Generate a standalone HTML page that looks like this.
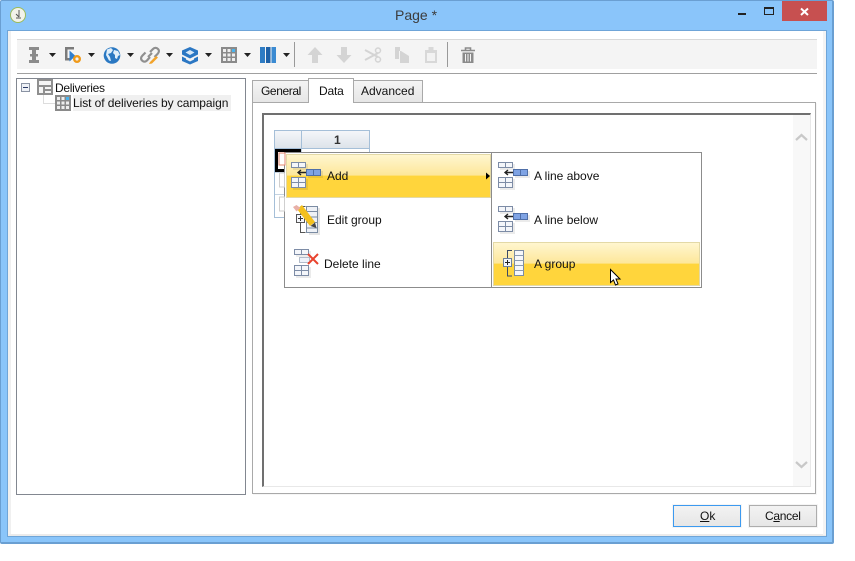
<!DOCTYPE html>
<html><head><meta charset="utf-8"><style>
html,body{margin:0;padding:0;background:#fff;width:855px;height:561px;overflow:hidden}
body{font:12px "Liberation Sans",sans-serif;color:#111;position:relative}
div{position:absolute;box-sizing:border-box}
.t{white-space:nowrap;line-height:14px}
svg{position:absolute;left:0;top:0}
u{text-underline-offset:1px}
</style></head><body>
<div style="left:0;top:0;width:834px;height:544px;background:#8ac5fa;border:1px solid #6a9fd2;border-radius:2px;border-width:1px 2px 2px 1px"></div>
<div style="left:7px;top:30px;width:820px;height:507px;background:#fff;border:1px solid #6fa5d8;border-right:2px solid #6fa5d8"></div>
<div style="left:8px;top:31px;width:3px;height:504px;background:#f0f0f0"></div>
<div style="left:8px;top:534px;width:818px;height:2px;background:#ebebeb"></div>
<div style="left:823px;top:31px;width:3px;height:504px;background:#f4f4f4"></div>
<div class="t" style="left:395px;top:8px;font-size:14px;color:#3c3c3c">Page *</div>
<div style="left:782px;top:1px;width:45px;height:20px;background:#c75050"></div>
<div style="left:738px;top:13px;width:8px;height:2px;background:#222"></div>
<div style="left:764px;top:7px;width:10px;height:8px;border:1px solid #222;border-top:2px solid #222"></div>

<div style="left:17px;top:39px;width:800px;height:30px;background:#f4f4f4;border-top:1px solid #d9d9d9"></div>
<div style="left:17px;top:73px;width:800px;height:1px;background:#a0a0a0"></div>
<div style="left:294px;top:42px;width:1px;height:25px;background:#999"></div>
<div style="left:447px;top:42px;width:1px;height:25px;background:#999"></div>

<div style="left:16px;top:78px;width:230px;height:417px;border:1px solid #828790;background:#fff"></div>
<div style="left:73px;top:95px;width:158px;height:16px;background:#f0f0f0"></div>
<div class="t" style="left:55px;top:81px;letter-spacing:-.3px">Deliveries</div>
<div class="t" style="left:73px;top:96px;letter-spacing:-.07px">List of deliveries by campaign</div>

<div style="left:252px;top:102px;width:564px;height:392px;border:1px solid #a9a9a9;background:#fff;box-shadow:1px 1px 0 #f6f6f6"></div>
<div style="left:252px;top:80px;width:57px;height:23px;background:linear-gradient(#f4f4f4,#e6e6e6);border:1px solid #a9a9a9"></div>
<div style="left:353px;top:80px;width:70px;height:23px;background:linear-gradient(#f4f4f4,#e6e6e6);border:1px solid #a9a9a9"></div>
<div style="left:308px;top:78px;width:46px;height:25px;background:#fff;border:1px solid #a9a9a9;border-bottom:0"></div>
<div class="t" style="left:261px;top:84px;letter-spacing:-.4px">General</div>
<div class="t" style="left:319px;top:84px;letter-spacing:-.2px">Data</div>
<div class="t" style="left:361px;top:84px">Advanced</div>

<div style="left:262px;top:113px;width:549px;height:374px;border:2px solid #707070;border-right:1px solid #e8e8e8;border-bottom:1px solid #e8e8e8"></div>
<div style="left:793px;top:115px;width:17px;height:371px;background:#f8f8f8"></div>

<div style="left:274px;top:130px;width:96px;height:88px;border:1px solid #a5bfd8;background:#fff"></div>
<div style="left:275px;top:131px;width:94px;height:18px;background:linear-gradient(#f4f6f9,#dde3ea);border-bottom:1px solid #a5bfd8"></div>
<div style="left:301px;top:131px;width:1px;height:18px;background:#a5bfd8"></div>
<div class="t" style="left:334px;top:133px;font-weight:bold;color:#333">1</div>
<div style="left:275px;top:149px;width:27px;height:23px;border:3px solid #000;background:#fff"></div>
<div style="left:275px;top:194px;width:27px;height:1px;background:#c5d3e0"></div>
<div style="left:301px;top:149px;width:1px;height:68px;background:#c5d3e0"></div>
<div style="left:275px;top:172px;width:94px;height:1px;background:#c5d3e0"></div>

<div style="left:284px;top:152px;width:418px;height:136px;border:1px solid #8c8c8c;background:#fff"></div>
<div style="left:491px;top:153px;width:1px;height:134px;background:#8c8c8c"></div>
<div style="left:286px;top:154px;width:205px;height:44px;border:1px solid #e3d9a6;background:linear-gradient(#fff6cf 0,#fde79a 48%,#ffd53c 50%,#ffd53c 100%)"></div>
<div style="left:493px;top:242px;width:207px;height:44px;border:1px solid #e3d9a6;background:linear-gradient(#fff6cf 0,#fde79a 48%,#ffd53c 50%,#ffd53c 100%)"></div>
<div class="t" style="left:327px;top:169px">Add</div>
<div class="t" style="left:327px;top:213px">Edit group</div>
<div class="t" style="left:324px;top:257px">Delete line</div>
<div class="t" style="left:534px;top:169px">A line above</div>
<div class="t" style="left:534px;top:213px">A line below</div>
<div class="t" style="left:534px;top:257px">A group</div>

<div style="left:673px;top:505px;width:68px;height:22px;border:1px solid #3c9af0;background:linear-gradient(#f3f3f3,#e6e6e6);box-shadow:0 0 0 1px #f5f5f5"></div>
<div style="left:749px;top:505px;width:68px;height:22px;border:1px solid #adadad;background:linear-gradient(#f3f3f3,#e6e6e6);box-shadow:0 0 0 1px #f5f5f5"></div>
<div class="t" style="left:700px;top:509px"><u>O</u>k</div>
<div class="t" style="left:765px;top:509px;letter-spacing:-.3px">C<u>a</u>ncel</div>

<svg width="855" height="561" viewBox="0 0 855 561" fill="none">
<defs>
<g id="arw"><path d="M0 0h7l-3.500 4z" fill="#222"/></g>
<g id="rows">
<path d="M2 2h15v6H2zM2 17h15v11H2zM17 9h15v7H17z" fill="#000" opacity=".08"/>
<path d="M.5.500h14v5H.5zM7.500.5v5" stroke="#7d8ca6" fill="#f4f6fa"/>
<path d="M.5 15.500h14v10H.5zM.5 20.500h14M7.500 15.500v10" stroke="#7d8ca6" fill="#f4f6fa"/>
<path d="M15.500 7.500h14v6h-14z" stroke="#4f6fa8" fill="#7fa3e4"/><path d="M22.500 7.500v6" stroke="#4f6fa8"/>
<path d="M7 10.500h8M10 8l-3 2.500 3 2.500" stroke="#222" stroke-width="1.400"/></g>
<g id="grid"><rect width="16" height="16" fill="#8a8a8a"/><path d="M2 2h3v3H2zM6.500 2h3v3h-3zM2 6.500h3v3H2zM6.500 6.500h3v3h-3zM11 6.500h3v3h-3zM2 11h3v3H2zM6.500 11h3v3h-3zM11 11h3v3h-3z" fill="#eee"/><rect x="11" y="2" width="3" height="3" fill="#48b4ee"/></g>
</defs>
<!-- close -->
<path d="M801 8.500l7 6.500M808 8.500l-7 6.500" stroke="#fff" stroke-width="2"/>
<!-- app icon -->
<circle cx="18" cy="15" r="7.500" fill="#f2f2ea" stroke="#9bbb59"/><path d="M19 10v7M16 14l3 3M16 18h5" stroke="#555"/>
<!-- toolbar arrows -->
<use href="#arw" x="49" y="53"/><use href="#arw" x="88" y="53"/><use href="#arw" x="127" y="53"/><use href="#arw" x="166" y="53"/><use href="#arw" x="205" y="53"/><use href="#arw" x="244" y="53"/><use href="#arw" x="283" y="53"/>
<!-- I-beam -->
<path d="M29 47h10v3h-3v4h2v2.500h-2V60h3v3H29v-3h3v-3.500h-2V54h2v-4h-3z" fill="#8b8b8b"/>
<!-- form icon -->
<path d="M65 47h9v2.500h-6.500V58H71v2.500h-6z" fill="#7b7b7b"/><path d="M69.500 50.500l6 5.500-6 5.500z" fill="#2f7fd0"/><circle cx="77" cy="59" r="2.800" stroke="#f09a1a" stroke-width="2.400"/>
<!-- globe -->
<circle cx="112" cy="55.500" r="8.300" fill="#2a78c2"/><path d="M107 49.500l4-1.500 2 2-2 3-3 1 2 3 1 4-2-.5-3-5.500zM114 50l4 1 2 4-2 1-1 3-2-1v-3l-2-2z" fill="#dfeefa"/>
<!-- link -->
<path d="M150 52l3-3c1.500-1.500 3.500-1.500 5 0s1 3.500-.5 5l-3 3M150 57l-3 3.500c-1.500 1.500-3.500 1.500-5 0s-1-3.500.5-5l3-3M148 57l4-4" stroke="#8f8f8f" stroke-width="2.200"/><path d="M150 62l6-6 2 1.500-6 6-3 .5z" fill="#f2a32a"/>
<!-- layers -->
<path d="M190 47l8 3.500v4l-8 4-8-4v-4z" fill="#2b77c3"/><path d="M190 50l4.500 2.500-4.500 2.500-4.500-2.500z" fill="#d8e8f7"/><path d="M182 56.500l4 2v1l4 2 4-2v-1l4-2v4.500l-8 3.500-8-3.500z" fill="#2b77c3"/>
<!-- grid -->
<use href="#grid" x="221" y="47"/>
<!-- columns -->
<rect x="260" y="47" width="5" height="16" fill="#2e7cc4"/><rect x="266" y="47" width="4.500" height="16" fill="#1f62a8"/><rect x="271.500" y="47" width="4.500" height="16" fill="#3a8ad2"/>
<!-- disabled -->
<path d="M315 47l7.500 8H318v8h-6v-8h-4.500z" fill="#d4d4d4"/>
<path d="M341 47h6v8h4.500l-7.500 8-7.500-8H341z" fill="#d4d4d4"/>
<path d="M365 50l13 7M365 60l13-7" stroke="#d4d4d4" stroke-width="2"/><circle cx="378" cy="50.500" r="2.500" stroke="#d4d4d4" stroke-width="1.500"/><circle cx="378" cy="59.500" r="2.500" stroke="#d4d4d4" stroke-width="1.500"/>
<path d="M395 47h5v4h-1v8h-4zM401 51l8 5v7h-9V51z" fill="#d4d4d4"/>
<path d="M425 50h3.500v-3h5v3h3.500v13h-12z" fill="#d8d8d8"/><rect x="427" y="53" width="8" height="8" fill="#f2f2f2"/>
<!-- trash -->
<path d="M461 50.500h14M465.500 50v-2h5v2" stroke="#8b8b8b" stroke-width="1.600"/><path d="M462.500 52.500h11v10.500h-11z" fill="#8b8b8b"/><path d="M465.500 54v7.500M468 54v7.500M470.500 54v7.500" stroke="#f4f4f4"/>
<!-- tree -->
<rect x="21.500" y="83.500" width="8" height="8" fill="#eef1f6" stroke="#8a93a3"/><path d="M23 87.500h5" stroke="#2b3a66"/>
<path d="M43.500 95v8.500H55" stroke="#ddd"/>
<rect x="37" y="79" width="16" height="16" fill="#8f8f8f"/><path d="M39 81h12v4H39zM39 87h4v6h-4zM45 87h6v2h-6zM45 91h6v2h-6z" fill="#f4f4f4"/>
<use href="#grid" x="55" y="95"/>
<!-- scroll chevrons -->
<path d="M796 140l5.500-5 5.500 5M796 462l5.500 5 5.500-5" stroke="#c8c8c8" stroke-width="2.200"/>
<!-- covered grid icons -->
<path d="M279 153h6v12h-6z" fill="#fff" stroke="#e58a70"/><path d="M279.500 173h5v14h-5zM279.500 197h5v14h-5z" stroke="#cfcfcf"/>
<!-- menu icons -->
<use href="#rows" x="291" y="162"/>
<use href="#rows" x="498" y="162"/>
<use href="#rows" x="498" y="206"/>
<path d="M486 172.500l4 3.500-4 3.500z" fill="#000"/>
<!-- edit group -->
<rect x="309" y="208" width="11" height="27" fill="#000" opacity=".1"/>
<path d="M300.500 206.500h5M300.500 206.500v8M300.500 223v9.500h5" stroke="#555"/><rect x="306.500" y="206.500" width="11" height="26" fill="#eef1f6" stroke="#7b8ca3"/><path d="M306.500 211.500h11M306.500 217h11M306.500 222.500h11M306.500 228h11" stroke="#7b8ca3"/><rect x="296.500" y="214.500" width="8" height="8" fill="#f4f6fa" stroke="#555"/><path d="M298 218.500h5M300.500 216v5" stroke="#333"/>
<path d="M297 209l5-4 13 17-5 4z" fill="#f3c01d"/><path d="M293 207l3.500-2 4 3-4 3.500z" fill="#e8b0a8"/><path d="M310.500 226l4.500-3.500 1.500 5.500z" fill="#444"/>
<!-- delete line -->
<rect x="296" y="251" width="15" height="6" fill="#000" opacity=".07"/><rect x="296" y="267" width="15" height="11" fill="#000" opacity=".08"/>
<path d="M294.500 249.500h14v5h-14zM301.500 249.500v5M294.500 265.500h14v10h-14zM294.500 270.500h14M301.500 265.500v10" stroke="#7d8ca6" fill="#f4f6fa"/><rect x="299.500" y="257.500" width="10" height="5" fill="#eef2fa" stroke="#6d7f99" stroke-dasharray="1 1"/><path d="M308 254l10 10M318 254l-10 10" stroke="#e8432e" stroke-width="2"/>
<!-- a group -->
<path d="M512 250.500h-4.500v8M507.500 266v10h4.500" stroke="#3c4a66"/><rect x="514.500" y="250.500" width="9" height="25" fill="#f6f7fa" stroke="#7b8ca3"/><path d="M514.500 255.500h9M514.500 260.500h9M514.500 265.500h9M514.500 270.500h9" stroke="#8b9bb0"/><rect x="503.500" y="258.500" width="8" height="8" fill="#f4f6fa" stroke="#6d7f99"/><path d="M505 262.500h5M507.500 260v5" stroke="#222"/>
<!-- cursor -->
<path d="M610.500 269.500v13l3-2.500 2 5 2.500-1-2-5h4z" fill="#fff" stroke="#000"/>
</svg>
</body></html>
